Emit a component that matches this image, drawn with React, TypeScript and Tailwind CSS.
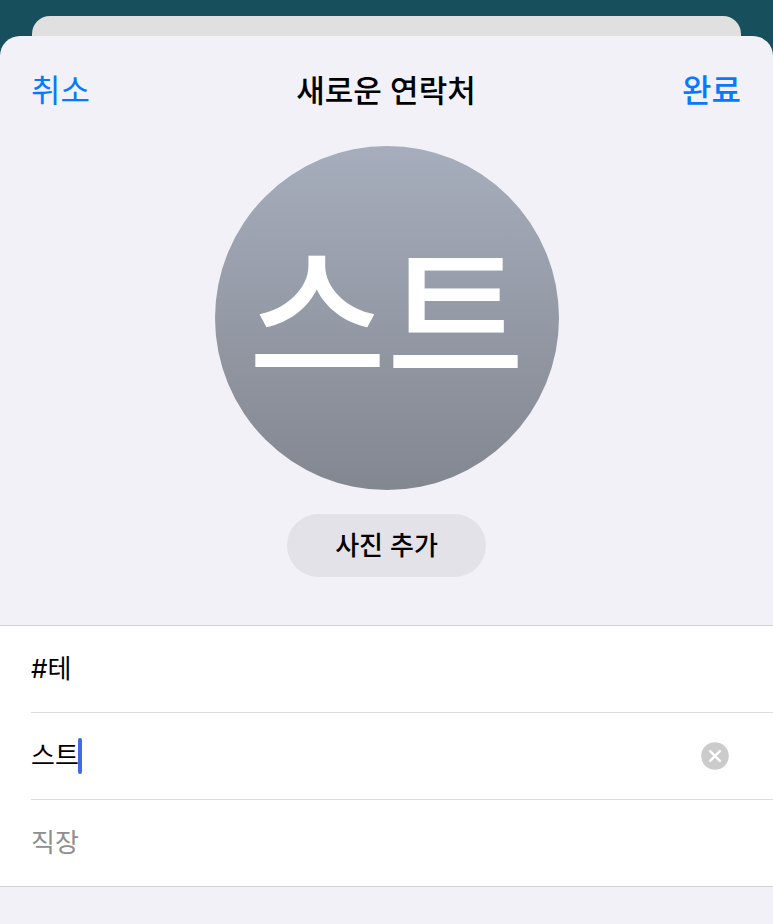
import React, { useState } from "react";

type FieldProps = {
  id: string;
  label: string;
  value: string;
  onChange: (value: string) => void;
  active?: boolean;
};

const Field = ({ id, label, value, onChange, active }: FieldProps) => {
  return (
    <div className="ml-[31px] flex h-[87px] items-center border-b border-[#dcdcde] pr-11 last:ml-0 last:border-[#d2d2d6] last:pl-[31px]">
      <label htmlFor={id} className="sr-only">
        {label}
      </label>
      {active ? (
        <>
          <input
            id={id}
            value={value}
            onChange={(e) => onChange(e.target.value)}
            className="field-sizing-content h-12 bg-transparent text-[26px] leading-[48px] text-black caret-transparent outline-none"
          />
          <span className="-ml-px h-9 w-1 shrink-0 rounded-full bg-[#4169e8]" />
          <button
            type="button"
            aria-label="지우기"
            onClick={() => onChange("")}
            className="ml-auto shrink-0"
          >
            <svg viewBox="0 0 28 28" className="size-7" fill="none">
              <circle cx="14" cy="14" r="13.8" fill="#cbcbcb" />
              <path
                d="M9.2 9.2L18.8 18.8M18.8 9.2L9.2 18.8"
                stroke="white"
                strokeWidth="2.4"
                strokeLinecap="round"
              />
            </svg>
          </button>
        </>
      ) : (
        <input
          id={id}
          value={value}
          placeholder={label}
          onChange={(e) => onChange(e.target.value)}
          className="h-12 w-full bg-transparent text-[26px] leading-[48px] text-black outline-none placeholder:text-[#8e8e90]"
        />
      )}
    </div>
  );
};

const App = () => {
  const [lastName, setLastName] = useState("#테");
  const [firstName, setFirstName] = useState("스트");
  const [company, setCompany] = useState("");

  return (
    <div className="flex min-h-screen flex-col bg-[#174f5c] pt-4 font-[Inter,'Noto_Sans_CJK_KR',sans-serif]">
      {/* sheet stacked behind */}
      <div className="mx-8 h-5 rounded-t-[18px] bg-[#e0e0e0]" />

      <main className="flex-1 rounded-t-[20px] bg-[#f2f1f8]">
        <header className="grid h-[110px] grid-cols-[1fr_auto_1fr] items-center pr-8 pl-[31px] text-[32px] leading-[48px]">
          <button type="button" className="justify-self-start text-[#067aff]">
            취소
          </button>
          <h1 className="text-[31px] font-medium text-black">새로운 연락처</h1>
          <button type="button" className="justify-self-end font-medium text-[#067aff]">
            완료
          </button>
        </header>

        <section className="flex flex-col items-center gap-6 pb-12">
          <div className="flex size-[344px] items-center justify-center rounded-full bg-linear-to-b from-[#a6adbc] to-[#838790] text-[150px] leading-none font-medium text-white">
            {firstName}
          </div>
          <button
            type="button"
            className="h-[63px] rounded-full bg-[#e3e2e8] px-12 text-[26px] leading-9 font-medium text-black"
          >
            사진 추가
          </button>
        </section>

        <form className="border-t border-[#d2d2d6] bg-white">
          <Field id="last-name" label="성" value={lastName} onChange={setLastName} />
          <Field id="first-name" label="이름" value={firstName} onChange={setFirstName} active />
          <Field id="company" label="직장" value={company} onChange={setCompany} />
        </form>
      </main>
    </div>
  );
};

export default App;
